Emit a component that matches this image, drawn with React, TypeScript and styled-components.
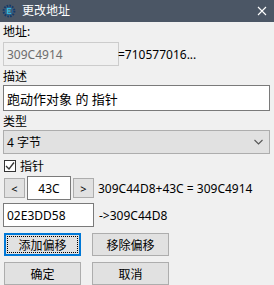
import React from 'react';
import styled, { createGlobalStyle } from 'styled-components';

const GlobalStyle = createGlobalStyle`
html, body {
  margin: 0;
  padding: 0;
  background: #f0f0f0;
}
* { box-sizing: border-box; }
`;

const FONT = `"Noto Sans", "Noto Sans CJK SC", sans-serif`;

const Window = styled.div`
width: 274px;
height: 285px;
background: #f0f0f0;
font-family: ${FONT};
font-size: 12px;
color: #000;
overflow: hidden;
`;

const TitleBar = styled.div`
height: 22px;
background: #4b5665;
display: flex;
align-items: center;
padding: 0 7px 0 2px;
color: #fff;
`;

const TitleText = styled.div`
flex: 1;
margin-left: 6px;
font-size: 12px;
line-height: 22px;
`;

const Body = styled.div`
display: flex;
flex-direction: column;
padding: 0 4px 0 3px;
`;

const Label = styled.div<{ top: number }>`
margin-top: ${p => p.top}px;
height: 16px;
line-height: 16px;
`;

const Row = styled.div<{ top?: number }>`
display: flex;
align-items: center;
margin-top: ${p => p.top ?? 0}px;
`;

const TextBox = styled.div<{ w?: number; h?: number; disabled?: boolean; center?: boolean }>`
width: ${p => (p.w ? `${p.w}px` : '100%')};
height: ${p => p.h ?? 24}px;
border: 1px solid ${p => (p.disabled ? '#cccccc' : '#7a7a7a')};
background: ${p => (p.disabled ? '#f0f0f0' : '#ffffff')};
color: ${p => (p.disabled ? '#6d6d6d' : '#000')};
display: flex;
align-items: center;
justify-content: ${p => (p.center ? 'center' : 'flex-start')};
padding: 0 3px;
white-space: nowrap;
flex-shrink: 0;
font-size: ${p => (p.h && p.h > 24 ? 13 : 12)}px;
`;

const SideText = styled.span<{ left?: number }>`
margin-left: ${p => p.left ?? 0}px;
white-space: nowrap;
`;

const Select = styled.div`
height: 24px;
border: 1px solid #adadad;
background: #e1e1e1;
display: flex;
align-items: center;
justify-content: space-between;
padding: 0 6px 0 3px;
`;

const CheckRow = styled.label`
display: flex;
align-items: center;
margin-top: 5px;
height: 13px;
gap: 4px;
padding-left: 1px;
`;

const CheckBox = styled.span`
width: 12px;
height: 12px;
border: 1px solid #333;
background: #fff;
display: flex;
align-items: center;
justify-content: center;
`;

const SmallButton = styled.button<{ left: number }>`
width: 21px;
height: 20px;
margin-left: ${p => p.left}px;
border: 1px solid #adadad;
background: #e1e1e1;
font-family: ${FONT};
font-size: 11px;
padding: 0;
display: flex;
align-items: center;
justify-content: center;
flex-shrink: 0;
`;

const ActionButton = styled.button<{ focused?: boolean }>`
width: 77px;
height: 23px;
border: ${p => (p.focused ? '2px solid #0078d7' : '1px solid #adadad')};
background: #e1e1e1;
font-family: ${FONT};
font-size: 12px;
color: #000;
padding: 0;
position: relative;
display: flex;
align-items: center;
justify-content: center;
&::after {
  content: '';
  display: ${p => (p.focused ? 'block' : 'none')};
  position: absolute;
  inset: 1px;
  border: 1px dotted #000;
}
`;

const ButtonRow = styled.div<{ top: number }>`
display: flex;
gap: 11px;
margin-top: ${p => p.top}px;
padding-left: 1px;
`;

const AppIcon = () => (
  <svg width="14" height="14" viewBox="0 0 14 14">
    <circle cx="7" cy="7" r="5.4" fill="none" stroke="#123a6b" strokeWidth="2" strokeDasharray="1.6 1.2" />
    <circle cx="7" cy="7" r="3.6" fill="none" stroke="#1d5f9a" strokeWidth="1" />
    <path d="M9.2 4.6 L5.4 4.6 L5.4 9.4 L9.2 9.4 M5.4 7 L8.4 7" fill="none" stroke="#35b4d6" strokeWidth="1.3" />
  </svg>
);

const CloseIcon = () => (
  <svg width="10" height="10" viewBox="0 0 10 10">
    <path d="M1 1 L9 9 M9 1 L1 9" stroke="#fff" strokeWidth="1.1" />
  </svg>
);

const Chevron = () => (
  <svg width="9" height="6" viewBox="0 0 9 6">
    <path d="M0.5 1 L4.5 5 L8.5 1" fill="none" stroke="#555" strokeWidth="1.1" />
  </svg>
);

const Check = () => (
  <svg width="10" height="10" viewBox="0 0 10 10">
    <path d="M1 5 L4 8 L9 1.5" fill="none" stroke="#333" strokeWidth="1.3" />
  </svg>
);

export default function App() {
  return (
    <Window>
      <GlobalStyle />
      <TitleBar>
        <AppIcon />
        <TitleText>更改地址</TitleText>
        <CloseIcon />
      </TitleBar>
      <Body>
        <Label top={2}>地址:</Label>
        <Row top={2}>
          <TextBox w={116} disabled>309C4914</TextBox>
          <SideText left={-1}>=710577016...</SideText>
        </Row>
        <Label top={3}>描述</Label>
        <TextBox h={26}>跑动作对象 的 指针</TextBox>
        <Label top={3}>类型</Label>
        <Select>
          <span>4 字节</span>
          <Chevron />
        </Select>
        <CheckRow>
          <CheckBox><Check /></CheckBox>
          <span>指针</span>
        </CheckRow>
        <Row top={4}>
          <SmallButton left={1}>&lt;</SmallButton>
          <TextBox w={44} center style={{ marginLeft: 2 }}>43C</TextBox>
          <SmallButton left={2}>&gt;</SmallButton>
          <SideText left={4}>309C44D8+43C = 309C4914</SideText>
        </Row>
        <Row top={3}>
          <TextBox w={91}>02E3DD58</TextBox>
          <SideText left={5}>-&gt;309C44D8</SideText>
        </Row>
        <ButtonRow top={6}>
          <ActionButton focused>添加偏移</ActionButton>
          <ActionButton>移除偏移</ActionButton>
        </ButtonRow>
        <ButtonRow top={6}>
          <ActionButton>确定</ActionButton>
          <ActionButton>取消</ActionButton>
        </ButtonRow>
      </Body>
    </Window>
  );
}
